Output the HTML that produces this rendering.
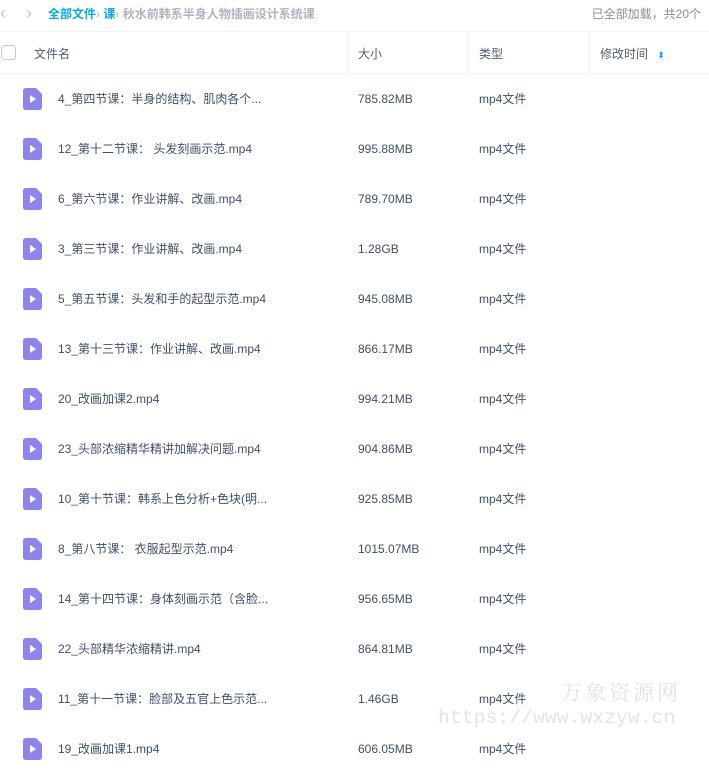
<!DOCTYPE html>
<html><head><meta charset="utf-8"><style>
*{margin:0;padding:0;box-sizing:border-box}
body{width:709px;height:752px;overflow:hidden;background:#fff;font-family:"Liberation Sans","Noto Sans CJK SC",sans-serif;font-size:12px;color:#424e67;position:relative}
.top{position:absolute;top:0;left:0;right:0;height:32px;border-bottom:1px solid #f1f2f4}
.nav{position:absolute;top:3px;font-size:18px;color:#c4c8d0;line-height:20px}
.bc{position:absolute;left:48px;top:6px;font-size:12px;line-height:16px;font-weight:bold;color:#06a7ff}
.bc .g{color:#afb3bf}
.bc .s{color:#afb3bf;font-weight:normal}
.loaded{position:absolute;right:8px;top:6px;font-size:12px;line-height:16px;color:#878c9c}
.hdr{position:absolute;top:33px;left:0;right:0;height:41px;border-bottom:1px solid #f1f2f4;color:#535b6e;font-size:12px}
.hdr div{position:absolute;top:13px;line-height:16px}
.sep{position:absolute;top:33px;width:1px;height:41px;background:#f1f2f4}
.cb{position:absolute;left:1px;top:45px;width:15px;height:15px;border:1px solid #c8cbd2;border-radius:3px}
.row{position:absolute;left:0;right:0;height:50px}
.row svg{position:absolute;left:23px;top:14px}
.row div{position:absolute;top:17px;line-height:16px;color:#424e67}
.row .n{left:58px}
.row .sz{left:358px}
.row .t{left:479px}
.wm1{position:absolute;left:561px;top:679px;font-size:21px;line-height:26px;color:#e2e2e2;letter-spacing:3px;font-family:"Noto Serif CJK SC",serif}
.wm2{position:absolute;left:438px;top:706px;font-size:19.8px;line-height:24px;color:#e4e4e4;font-family:"Liberation Mono",monospace}
</style></head><body>
<div class="top">
<div class="nav" style="left:0">‹</div><div class="nav" style="left:26px">›</div>
<div class="bc">全部文件<span class="s">›</span> 课<span class="s">›</span> <span class="g">秋水前韩系半身人物插画设计系统课</span></div>
<div class="loaded">已全部加载，共20个</div>
</div>
<div class="hdr">
<div style="left:34px">文件名</div>
<div style="left:358px">大小</div>
<div style="left:479px">类型</div>
<div style="left:600px">修改时间 <span style="color:#06a7ff;font-size:9px;margin-left:6px">⬍</span></div>
</div>
<div class="cb"></div>
<div class="sep" style="left:347px"></div><div class="sep" style="left:468px"></div><div class="sep" style="left:589px"></div>
<div class="row" style="top:74px"><svg width="19" height="22" viewBox="0 0 19 22"><path d="M3 0H13L19 6V19Q19 22 16 22H3Q0 22 0 19V3Q0 0 3 0Z" fill="#8d84f0"/><path d="M7 7L13 11L7 15Z" fill="#fff"/></svg><div class="n">4_第四节课：半身的结构、肌肉各个...</div><div class="sz">785.82MB</div><div class="t">mp4文件</div></div>
<div class="row" style="top:124px"><svg width="19" height="22" viewBox="0 0 19 22"><path d="M3 0H13L19 6V19Q19 22 16 22H3Q0 22 0 19V3Q0 0 3 0Z" fill="#8d84f0"/><path d="M7 7L13 11L7 15Z" fill="#fff"/></svg><div class="n">12_第十二节课： 头发刻画示范.mp4</div><div class="sz">995.88MB</div><div class="t">mp4文件</div></div>
<div class="row" style="top:174px"><svg width="19" height="22" viewBox="0 0 19 22"><path d="M3 0H13L19 6V19Q19 22 16 22H3Q0 22 0 19V3Q0 0 3 0Z" fill="#8d84f0"/><path d="M7 7L13 11L7 15Z" fill="#fff"/></svg><div class="n">6_第六节课：作业讲解、改画.mp4</div><div class="sz">789.70MB</div><div class="t">mp4文件</div></div>
<div class="row" style="top:224px"><svg width="19" height="22" viewBox="0 0 19 22"><path d="M3 0H13L19 6V19Q19 22 16 22H3Q0 22 0 19V3Q0 0 3 0Z" fill="#8d84f0"/><path d="M7 7L13 11L7 15Z" fill="#fff"/></svg><div class="n">3_第三节课：作业讲解、改画.mp4</div><div class="sz">1.28GB</div><div class="t">mp4文件</div></div>
<div class="row" style="top:274px"><svg width="19" height="22" viewBox="0 0 19 22"><path d="M3 0H13L19 6V19Q19 22 16 22H3Q0 22 0 19V3Q0 0 3 0Z" fill="#8d84f0"/><path d="M7 7L13 11L7 15Z" fill="#fff"/></svg><div class="n">5_第五节课：头发和手的起型示范.mp4</div><div class="sz">945.08MB</div><div class="t">mp4文件</div></div>
<div class="row" style="top:324px"><svg width="19" height="22" viewBox="0 0 19 22"><path d="M3 0H13L19 6V19Q19 22 16 22H3Q0 22 0 19V3Q0 0 3 0Z" fill="#8d84f0"/><path d="M7 7L13 11L7 15Z" fill="#fff"/></svg><div class="n">13_第十三节课：作业讲解、改画.mp4</div><div class="sz">866.17MB</div><div class="t">mp4文件</div></div>
<div class="row" style="top:374px"><svg width="19" height="22" viewBox="0 0 19 22"><path d="M3 0H13L19 6V19Q19 22 16 22H3Q0 22 0 19V3Q0 0 3 0Z" fill="#8d84f0"/><path d="M7 7L13 11L7 15Z" fill="#fff"/></svg><div class="n">20_改画加课2.mp4</div><div class="sz">994.21MB</div><div class="t">mp4文件</div></div>
<div class="row" style="top:424px"><svg width="19" height="22" viewBox="0 0 19 22"><path d="M3 0H13L19 6V19Q19 22 16 22H3Q0 22 0 19V3Q0 0 3 0Z" fill="#8d84f0"/><path d="M7 7L13 11L7 15Z" fill="#fff"/></svg><div class="n">23_头部浓缩精华精讲加解决问题.mp4</div><div class="sz">904.86MB</div><div class="t">mp4文件</div></div>
<div class="row" style="top:474px"><svg width="19" height="22" viewBox="0 0 19 22"><path d="M3 0H13L19 6V19Q19 22 16 22H3Q0 22 0 19V3Q0 0 3 0Z" fill="#8d84f0"/><path d="M7 7L13 11L7 15Z" fill="#fff"/></svg><div class="n">10_第十节课：韩系上色分析+色块(明...</div><div class="sz">925.85MB</div><div class="t">mp4文件</div></div>
<div class="row" style="top:524px"><svg width="19" height="22" viewBox="0 0 19 22"><path d="M3 0H13L19 6V19Q19 22 16 22H3Q0 22 0 19V3Q0 0 3 0Z" fill="#8d84f0"/><path d="M7 7L13 11L7 15Z" fill="#fff"/></svg><div class="n">8_第八节课： 衣服起型示范.mp4</div><div class="sz">1015.07MB</div><div class="t">mp4文件</div></div>
<div class="row" style="top:574px"><svg width="19" height="22" viewBox="0 0 19 22"><path d="M3 0H13L19 6V19Q19 22 16 22H3Q0 22 0 19V3Q0 0 3 0Z" fill="#8d84f0"/><path d="M7 7L13 11L7 15Z" fill="#fff"/></svg><div class="n">14_第十四节课：身体刻画示范（含脸...</div><div class="sz">956.65MB</div><div class="t">mp4文件</div></div>
<div class="row" style="top:624px"><svg width="19" height="22" viewBox="0 0 19 22"><path d="M3 0H13L19 6V19Q19 22 16 22H3Q0 22 0 19V3Q0 0 3 0Z" fill="#8d84f0"/><path d="M7 7L13 11L7 15Z" fill="#fff"/></svg><div class="n">22_头部精华浓缩精讲.mp4</div><div class="sz">864.81MB</div><div class="t">mp4文件</div></div>
<div class="row" style="top:674px"><svg width="19" height="22" viewBox="0 0 19 22"><path d="M3 0H13L19 6V19Q19 22 16 22H3Q0 22 0 19V3Q0 0 3 0Z" fill="#8d84f0"/><path d="M7 7L13 11L7 15Z" fill="#fff"/></svg><div class="n">11_第十一节课：脸部及五官上色示范...</div><div class="sz">1.46GB</div><div class="t">mp4文件</div></div>
<div class="row" style="top:724px"><svg width="19" height="22" viewBox="0 0 19 22"><path d="M3 0H13L19 6V19Q19 22 16 22H3Q0 22 0 19V3Q0 0 3 0Z" fill="#8d84f0"/><path d="M7 7L13 11L7 15Z" fill="#fff"/></svg><div class="n">19_改画加课1.mp4</div><div class="sz">606.05MB</div><div class="t">mp4文件</div></div>
<div class="wm1">万象资源网</div>
<div class="wm2">https://www.wxzyw.cn</div>
</body></html>
